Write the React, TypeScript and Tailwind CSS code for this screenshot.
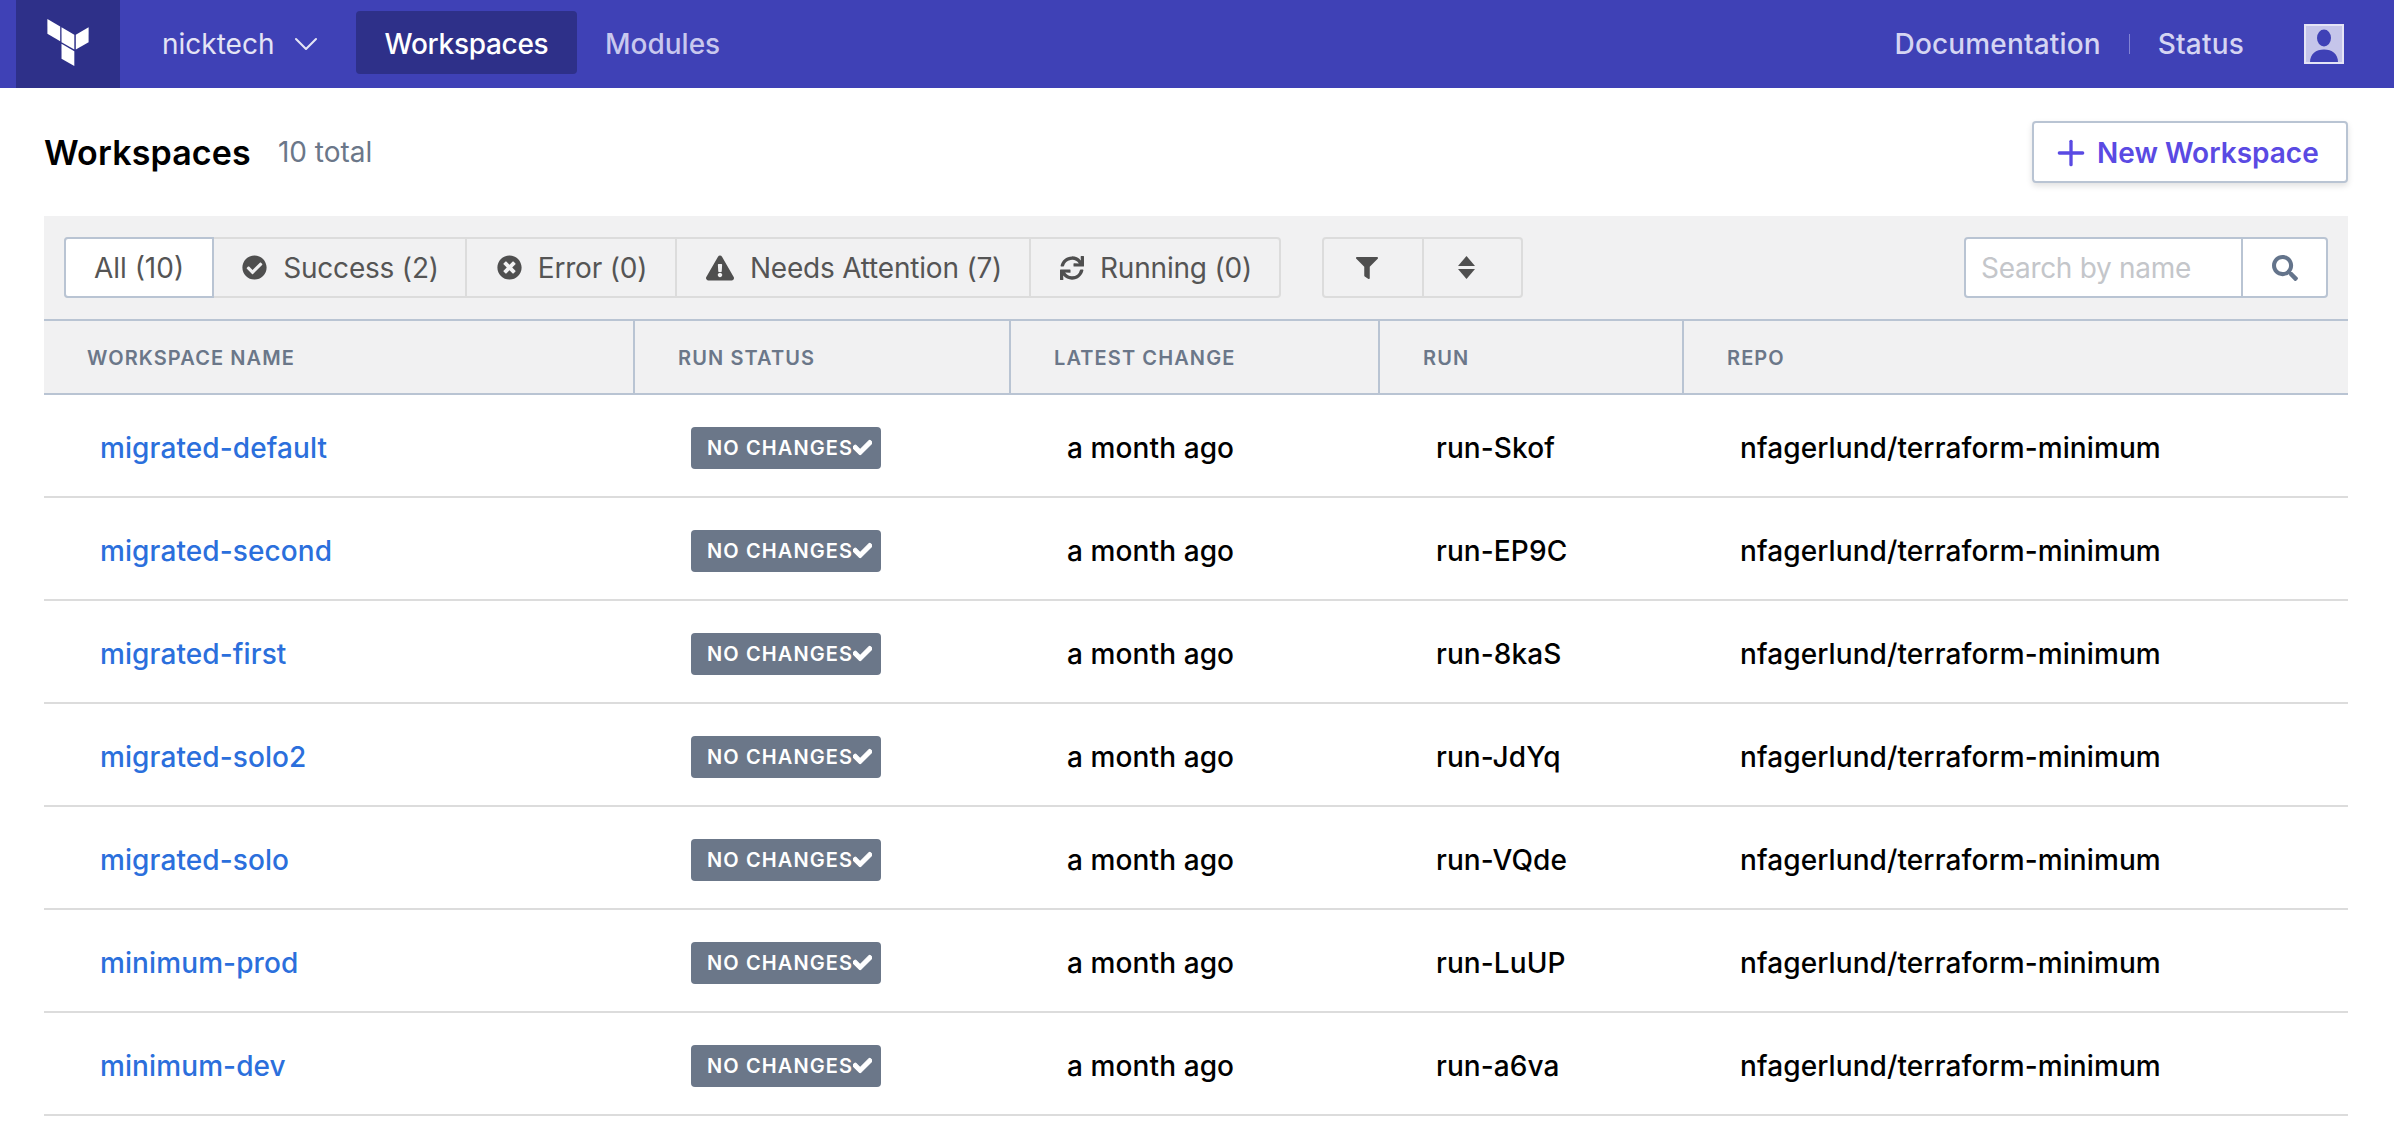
import { ChevronDown, Plus } from "lucide-react";
import {
  FaCheck,
  FaCheckCircle,
  FaExclamationTriangle,
  FaFilter,
  FaSearch,
  FaSync,
  FaTimesCircle,
} from "react-icons/fa";

const filterTabs = [
  { label: "All (10)", width: "w-[150px]", active: true },
  { label: "Success (2)", width: "w-[253px]", icon: FaCheckCircle, iconSize: "size-[25px]" },
  { label: "Error (0)", width: "w-[210px]", icon: FaTimesCircle, iconSize: "size-[25px]" },
  { label: "Needs Attention (7)", width: "w-[354px]", icon: FaExclamationTriangle, iconSize: "size-[28px]" },
  { label: "Running (0)", width: "w-[248px]", icon: FaSync, iconSize: "size-[24px]" },
];

const columns = ["Workspace Name", "Run Status", "Latest Change", "Run", "Repo"];

const workspaces = [
  { name: "migrated-default", run: "run-Skof" },
  { name: "migrated-second", run: "run-EP9C" },
  { name: "migrated-first", run: "run-8kaS" },
  { name: "migrated-solo2", run: "run-JdYq" },
  { name: "migrated-solo", run: "run-VQde" },
  { name: "minimum-prod", run: "run-LuUP" },
  { name: "minimum-dev", run: "run-a6va" },
];

const gridCols = "grid grid-cols-[591px_376px_369px_304px_1fr]";

const TerraformLogo = () => (
  <svg viewBox="3.4 2.4 55.4 63.2" className="-mt-[3px] h-[47px] w-[42px] fill-white">
    <path d="M3.4 2.4 20.6 12.4V32.2L3.4 22.3Z" />
    <path d="M22.4 13.6 39.6 23.5V43.4L22.4 33.5Z" />
    <path d="M41.6 23.5 58.8 13.6V33.5L41.6 43.4Z" />
    <path d="M22.4 35.8 39.6 45.7V65.6L22.4 55.7Z" />
  </svg>
);

const Avatar = () => (
  <div className="size-[40px] border-2 border-[#e4e4f5] bg-[#c5c5ea]">
    <svg viewBox="0 0 36 36" className="size-full fill-[#3f41b6]">
      <ellipse cx="18" cy="12" rx="7" ry="8.5" />
      <path d="M4 36c0-8 6-12.5 14-12.5S32 28 32 36Z" />
    </svg>
  </div>
);

const SortIcon = () => (
  <svg viewBox="0 0 17 23" className="mr-[12px] h-[23px] w-[17px] fill-[#4f4f4f]">
    <path d="M8.5 0 17 10H0Z" />
    <path d="M0 13H17L8.5 23Z" />
  </svg>
);

const App = () => {
  return (
    <div className="h-screen overflow-hidden bg-white font-['Inter',sans-serif]">
      <header className="flex h-[88px] items-center bg-[#3f41b6] pl-4 pr-[50px] text-[28px] font-medium">
        <div className="flex h-full w-[104px] items-center justify-center bg-[#2e3089]">
          <TerraformLogo />
        </div>
        <div className="ml-[42px] flex w-[194px] items-center font-normal text-[#e4e4f5]">
          nicktech
          <ChevronDown className="ml-[12px] size-[40px]" strokeWidth={1.25} />
        </div>
        <div className="-mt-[3px] flex h-[63px] w-[221px] items-center justify-center rounded bg-[#2e3089] pt-[3px] tracking-[-0.3px] text-white">
          Workspaces
        </div>
        <div className="ml-[28px] text-[#c8c8ee]">Modules</div>
        <div className="ml-auto tracking-[0.15px] text-[#d5d5f2]">Documentation</div>
        <div className="mx-[28px] h-[20px] w-px bg-[#8284d4]" />
        <div className="tracking-[0.2px] text-[#d5d5f2]">Status</div>
        <div className="ml-[60px]">
          <Avatar />
        </div>
      </header>

      <main className="pl-[44px] pr-[46px]">
        <div className="flex h-[128px] items-center justify-between">
          <div className="flex items-center">
            <h1 className="text-[34px] font-semibold tracking-[0.15px] text-black">Workspaces</h1>
            <span className="ml-[27px] text-[28px] text-[#6b7789]">10 total</span>
          </div>
          <button className="flex h-[62px] w-[316px] items-center rounded border-2 border-[#b9c4d3] bg-white pl-[17px] pt-[2px] text-[28px] font-semibold text-[#5a4ae3] shadow-[0_3px_6px_rgba(0,0,0,0.12)]">
            <Plus className="mr-[6px] size-[40px]" strokeWidth={2} />
            New Workspace
          </button>
        </div>

        <div className="flex h-[103px] items-center bg-[#f1f1f2] pl-5 pr-5 text-[28px] text-[#555]">
          <div className="flex h-[61px] rounded border-2 border-[#dcdcdc]">
            {filterTabs.map((tab) => {
              const Icon = tab.icon;
              return (
                <div
                  key={tab.label}
                  className={
                    tab.active
                      ? "-my-[2px] -ml-[2px] flex w-[150px] items-center justify-center rounded-l border-2 border-[#b9c4d3] bg-white"
                      : `flex ${tab.width} items-center justify-center gap-[16px] border-r-2 border-[#dcdcdc] pl-[2px] tracking-[-0.2px] last:border-r-0`
                  }
                >
                  {Icon && <Icon className={`${tab.iconSize} text-[#4f4f4f]`} />}
                  {tab.label}
                </div>
              );
            })}
          </div>
          <div className="ml-[41px] flex h-[61px] w-[201px] rounded border-2 border-[#dcdcdc] text-[#4f4f4f]">
            <div className="flex w-[100px] items-center justify-center border-r-2 border-[#dcdcdc]">
              <FaFilter className="mr-[12px] size-[22px]" />
            </div>
            <div className="flex flex-1 items-center justify-center">
              <SortIcon />
            </div>
          </div>
          <div className="ml-auto flex h-[61px] w-[364px] rounded border-2 border-[#b9c4d3] bg-white">
            <input
              placeholder="Search by name"
              className="w-[277px] border-r-2 border-[#b9c4d3] pl-[15px] tracking-[-0.3px] outline-none placeholder:text-[#c4c6ca]"
            />
            <div className="flex flex-1 items-center justify-center text-[#64748b]">
              <FaSearch className="size-[26px]" />
            </div>
          </div>
        </div>

        <div
          className={`${gridCols} h-[76px] border-y-2 border-[#b9c4d3] bg-[#f1f1f2] text-[20px] font-semibold uppercase tracking-[1.1px] text-[#6b7789]`}
        >
          {columns.map((column, i) => (
            <div
              key={column}
              className={`flex items-center pl-[43px] pt-[1px] ${i < columns.length - 1 ? "border-r-2 border-[#b9c4d3]" : ""}`}
            >
              {column}
            </div>
          ))}
        </div>

        {workspaces.map((workspace) => (
          <div
            key={workspace.name}
            className={`${gridCols} h-[103px] items-center border-b-2 border-[#dcdcdc] pt-[5px] text-[28px] font-medium tracking-[0.1px] text-black`}
          >
            <div className="pl-[56px] text-[#2b6fdc]">{workspace.name}</div>
            <div className="pl-[56px]">
              <span className="inline-flex h-[42px] w-[190px] -translate-y-[2px] items-center rounded bg-[#6b7789] pl-[16px] text-[20px] font-semibold tracking-[1.1px] text-white">
                NO CHANGES
                <FaCheck className="size-[19px] stroke-current stroke-[30]" />
              </span>
            </div>
            <div className="pl-[56px]">a month ago</div>
            <div className="pl-[56px]">{workspace.run}</div>
            <div className="pl-[56px]">nfagerlund/terraform-minimum</div>
          </div>
        ))}
      </main>
    </div>
  );
};

export default App;
